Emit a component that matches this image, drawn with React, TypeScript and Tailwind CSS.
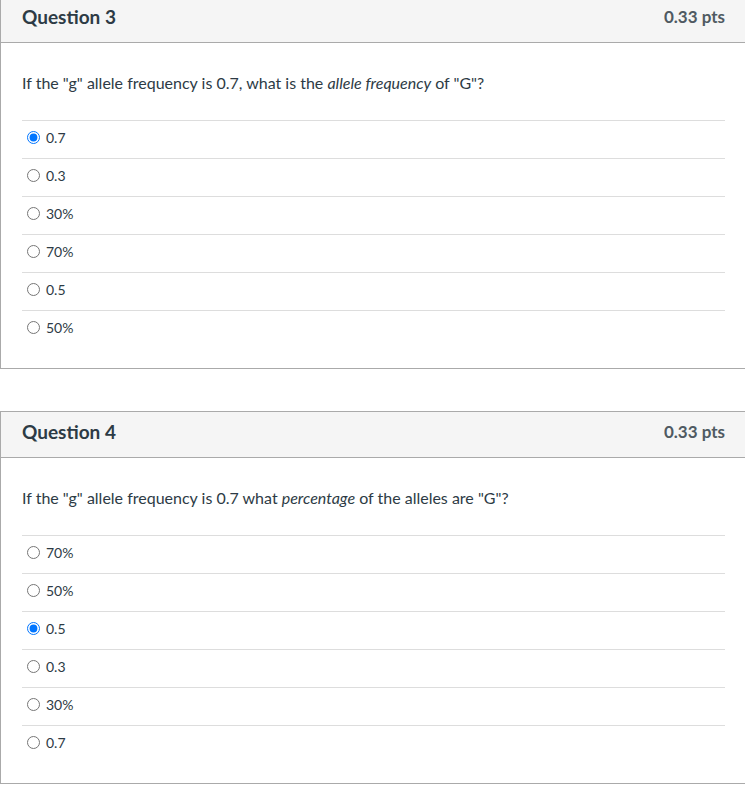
interface Answer { text: string; checked?: boolean }
interface Question { n: number; pts: string; prompt: React.ReactNode; answers: Answer[] }

const QUESTIONS: Question[] = [
  {
    n: 3,
    pts: "0.33 pts",
    prompt: (
      <>
        If the "g" allele frequency is 0.7, what is the <em>allele frequency</em> of "G"?
      </>
    ),
    answers: [
      { text: "0.7", checked: true },
      { text: "0.3" },
      { text: "30%" },
      { text: "70%" },
      { text: "0.5" },
      { text: "50%" },
    ],
  },
  {
    n: 4,
    pts: "0.33 pts",
    prompt: (
      <>
        If the "g" allele frequency is 0.7 what <em>percentage</em> of the alleles are "G"?
      </>
    ),
    answers: [
      { text: "70%" },
      { text: "50%" },
      { text: "0.5", checked: true },
      { text: "0.3" },
      { text: "30%" },
      { text: "0.7" },
    ],
  },
];

export default function App() {
  return (
    <div
      className="h-[791px] w-[745px] overflow-hidden bg-white text-[#2d3b45]"
      style={{ fontFamily: "Lato, 'Open Sans', sans-serif" }}
    >
      {/* first card's top edge is cropped off in the shot */}
      <div className="-mt-[4px] flex flex-col gap-[42px]">
        {QUESTIONS.map((q) => (
          <QuestionCard key={q.n} q={q} />
        ))}
      </div>
    </div>
  );
}

function QuestionCard({ q }: { q: Question }) {
  return (
    <section className="border-y border-l border-[#aaaaaa]">
      {/* header */}
      <div className="flex h-[46px] items-start justify-between border-b border-[#aaaaaa] bg-[#f5f5f5] pl-[21px] pr-[20px] pt-[7px]">
        <h2 className="text-[19px] font-bold leading-[26px]">Question {q.n}</h2>
        <span className="text-[17px] font-bold leading-[26px] text-[#4f5a62]">{q.pts}</span>
      </div>

      {/* body */}
      <div className="pl-[21px] pr-[20px] pt-[28px] pb-[20px]">
        <p className="mb-[25px] text-[16px] leading-[24px]">{q.prompt}</p>
        <div>
          {q.answers.map((a, i) => (
            <label key={i} className="flex h-[38px] items-center gap-[6px] border-t border-[#dddddd] pb-[4px] pl-[5px]">
              <input
                type="radio"
                name={`q${q.n}`}
                defaultChecked={a.checked}
                className="m-0 h-[13px] w-[13px]"
              />
              <span className="text-[14px] leading-[20px]">{a.text}</span>
            </label>
          ))}
        </div>
      </div>
    </section>
  );
}
